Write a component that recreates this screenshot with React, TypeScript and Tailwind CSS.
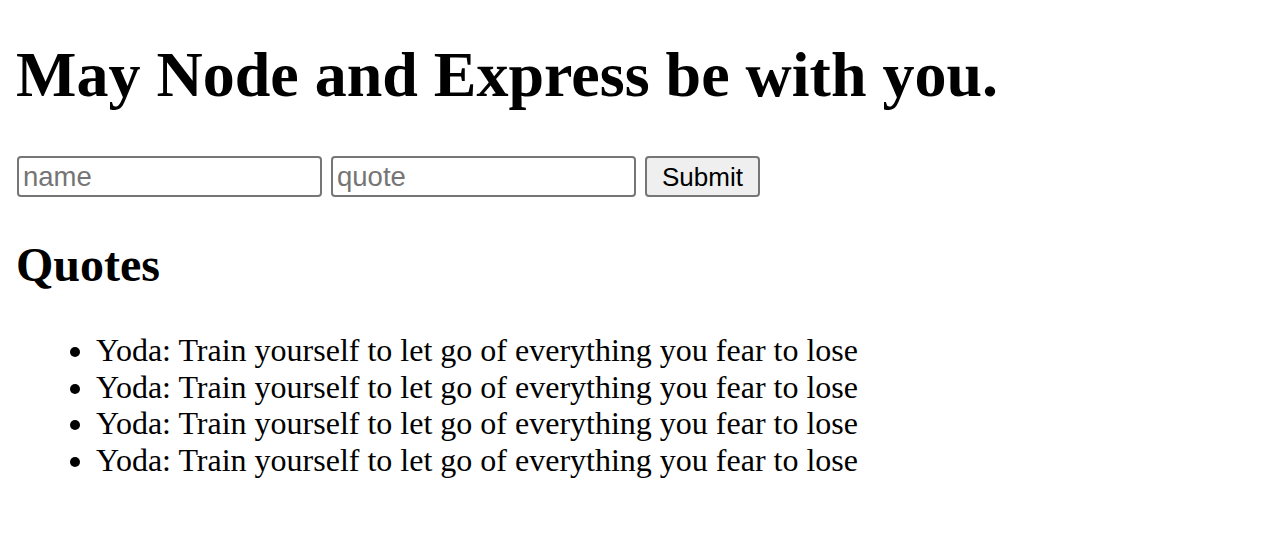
export default function App() {
  const quotes = Array.from({ length: 4 }, () => "Yoda: Train yourself to let go of everything you fear to lose");
  return (
    <div className="min-h-[556px] bg-white text-black px-4 pt-[1px] font-['Liberation_Serif',serif]">
      <h1 className="mt-[37px] mb-[44px] text-[64px] font-bold leading-[74px]">May Node and Express be with you.</h1>
      <form className="flex items-center gap-[9px] font-['Liberation_Sans',Arial,sans-serif]">
        <input
          placeholder="name"
          className="w-[305px] h-[41px] ml-[1px] border-2 border-[#767676] rounded-[4px] pl-[4px] pr-[4px] pt-[1px] text-[27.5px] placeholder:text-[#757575] outline-none"
        />
        <input
          placeholder="quote"
          className="w-[305px] h-[41px] border-2 border-[#767676] rounded-[4px] pl-[4px] pr-[4px] pt-[1px] text-[27.5px] placeholder:text-[#757575] outline-none"
        />
        <button
          type="button"
          className="w-[115px] h-[41px] border-2 border-[#767676] rounded-[4px] bg-[#efefef] text-[26px] text-black"
        >
          Submit
        </button>
      </form>
      <h2 className="mt-[40px] mb-[40px] text-[48px] font-bold leading-[55px]">Quotes</h2>
      <ul className="list-disc pl-[80px] text-[32px] leading-[36.5px]">
        {quotes.map((q, i) => (
          <li key={i}>{q}</li>
        ))}
      </ul>
    </div>
  );
}
